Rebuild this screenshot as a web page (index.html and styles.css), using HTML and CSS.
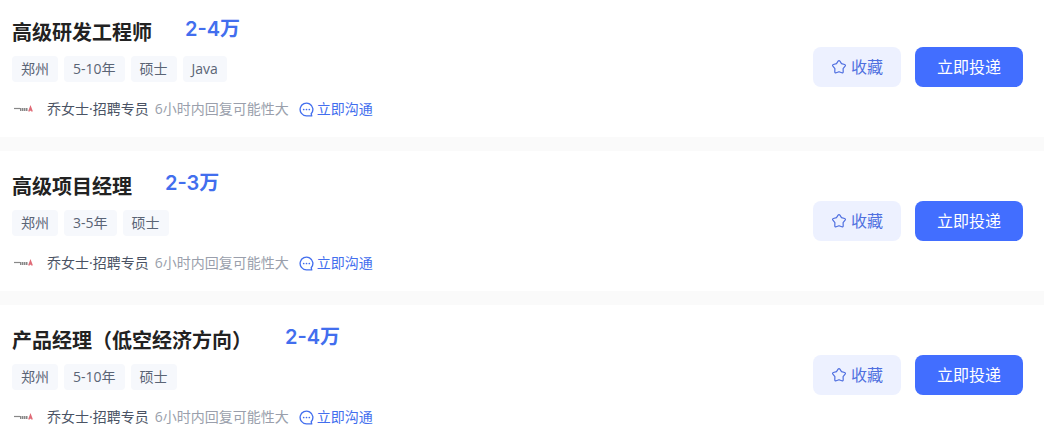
FILE: index.html
```html
<!DOCTYPE html>
<html lang="zh-CN">
<head>
<meta charset="utf-8">
<meta name="viewport" content="width=device-width, initial-scale=1">
<title>招聘职位</title>
<link rel="stylesheet" href="styles.css">
</head>
<body>
<svg class="sprite" aria-hidden="true">
  <symbol id="star" viewBox="0 0 16 16"><path d="M7.1 2.2Q8 .9 8.9 2.2L10.5 4.6 13.6 5.5Q15 6 14.1 7.2L12.1 9.6 12.2 12.7Q12.2 14.2 10.8 13.7L8 12.7 5.2 13.7Q3.8 14.2 3.8 12.7L3.9 9.6 1.9 7.2Q1 6 2.4 5.5L5.5 4.6Z" fill="none" stroke="currentColor" stroke-width="1.2" stroke-linejoin="round"/></symbol>
  <symbol id="chat" viewBox="0 0 16 16"><path d="M13 12.6A6.8 6.8 0 1 0 8 14.8H13.6L13 12.6" fill="none" stroke="currentColor" stroke-width="1.4" stroke-linejoin="round" stroke-linecap="round"/><circle cx="5" cy="8" r=".9" fill="currentColor"/><circle cx="8" cy="8" r=".9" fill="currentColor"/><circle cx="11" cy="8" r=".9" fill="currentColor"/></symbol>
  <symbol id="brand" viewBox="0 0 24 24"><path d="M2 11.5H8" stroke="#888" stroke-width="1.2"/><path d="M8 12.5H16" stroke="#888" stroke-width="3" stroke-dasharray="1.5 .5"/><path d="M16.8 14.5L18.5 10 20.2 14.5M17 13H20" fill="none" stroke="#e06a76" stroke-width="1.4"/></symbol>
</svg>
<main class="jobs">
  <article class="job">
    <div class="info">
      <div class="heading"><h2 class="title">高级研发工程师</h2><span class="salary">2-4万</span></div>
      <ul class="tags"><li class="tag">郑州</li><li class="tag">5-10年</li><li class="tag">硕士</li><li class="tag">Java</li></ul>
      <div class="contact"><svg class="brand" aria-hidden="true"><use href="#brand"/></svg><span class="person">乔女士·招聘专员</span><span class="reply">6小时内回复可能性大</span><a class="chat" href="#"><svg class="bubble" aria-hidden="true"><use href="#chat"/></svg>立即沟通</a></div>
    </div>
    <div class="actions"><button class="button favorite" type="button"><svg class="star" aria-hidden="true"><use href="#star"/></svg>收藏</button><button class="button apply" type="button">立即投递</button></div>
  </article>
  <article class="job">
    <div class="info">
      <div class="heading"><h2 class="title">高级项目经理</h2><span class="salary">2-3万</span></div>
      <ul class="tags"><li class="tag">郑州</li><li class="tag">3-5年</li><li class="tag">硕士</li></ul>
      <div class="contact"><svg class="brand" aria-hidden="true"><use href="#brand"/></svg><span class="person">乔女士·招聘专员</span><span class="reply">6小时内回复可能性大</span><a class="chat" href="#"><svg class="bubble" aria-hidden="true"><use href="#chat"/></svg>立即沟通</a></div>
    </div>
    <div class="actions"><button class="button favorite" type="button"><svg class="star" aria-hidden="true"><use href="#star"/></svg>收藏</button><button class="button apply" type="button">立即投递</button></div>
  </article>
  <article class="job">
    <div class="info">
      <div class="heading"><h2 class="title">产品经理（低空经济方向）</h2><span class="salary">2-4万</span></div>
      <ul class="tags"><li class="tag">郑州</li><li class="tag">5-10年</li><li class="tag">硕士</li></ul>
      <div class="contact"><svg class="brand" aria-hidden="true"><use href="#brand"/></svg><span class="person">乔女士·招聘专员</span><span class="reply">6小时内回复可能性大</span><a class="chat" href="#"><svg class="bubble" aria-hidden="true"><use href="#chat"/></svg>立即沟通</a></div>
    </div>
    <div class="actions"><button class="button favorite" type="button"><svg class="star" aria-hidden="true"><use href="#star"/></svg>收藏</button><button class="button apply" type="button">立即投递</button></div>
  </article>
</main>
</body>
</html>
```
FILE: styles.css
```css
* { box-sizing: border-box; }
body {
  margin: 0;
  background: #fff;
  color: #222;
  font: 14px/20px "Open Sans", "Noto Sans CJK SC", sans-serif;
}
.sprite { display: none; }
.jobs {
  display: flex;
  flex-direction: column;
  gap: 14px;
  background: #fafafa;
}
.job {
  display: flex;
  justify-content: space-between;
  align-items: center;
  gap: 24px;
  padding: 20px 21px 16px 12px;
  background: #fff;
}
.job:first-child { padding-top: 17px; }
.heading {
  display: flex;
  align-items: flex-start;
  gap: 33px;
}
.title {
  margin: 0;
  font-size: 20px;
  line-height: 32px;
  font-weight: 700;
}
.salary {
  color: #426eee;
  font: 600 20px/24px Inter, "Noto Sans CJK SC", sans-serif;
}
.tags {
  display: flex;
  gap: 6px;
  margin: 7px 0 0;
  padding: 0;
  list-style: none;
}
.tag {
  padding: 3px 9px;
  border-radius: 4px;
  background: #f6f8fc;
  color: #5a6475;
}
.contact {
  display: flex;
  align-items: center;
  margin-top: 15px;
  height: 24px;
}
.brand { width: 24px; height: 24px; margin-right: 11px; }
.person { color: #4a5364; margin-right: 6px; }
.reply { color: #9a9fac; margin-right: 10px; }
.chat {
  display: flex;
  align-items: center;
  gap: 3px;
  color: #426eee;
  text-decoration: none;
}
.star { width: 16px; height: 16px; }
.bubble { width: 15px; height: 15px; }
.actions {
  display: flex;
  gap: 14px;
  padding-bottom: 4px;
}
.button {
  display: flex;
  align-items: center;
  justify-content: center;
  gap: 4px;
  height: 40px;
  border: 0;
  border-radius: 8px;
  font: 16px/24px "Open Sans", "Noto Sans CJK SC", sans-serif;
  cursor: pointer;
}
.favorite { min-width: 88px; background: #edf1ff; color: #4f6fe0; }
.apply { min-width: 108px; background: #426eff; color: #fff; }
```
